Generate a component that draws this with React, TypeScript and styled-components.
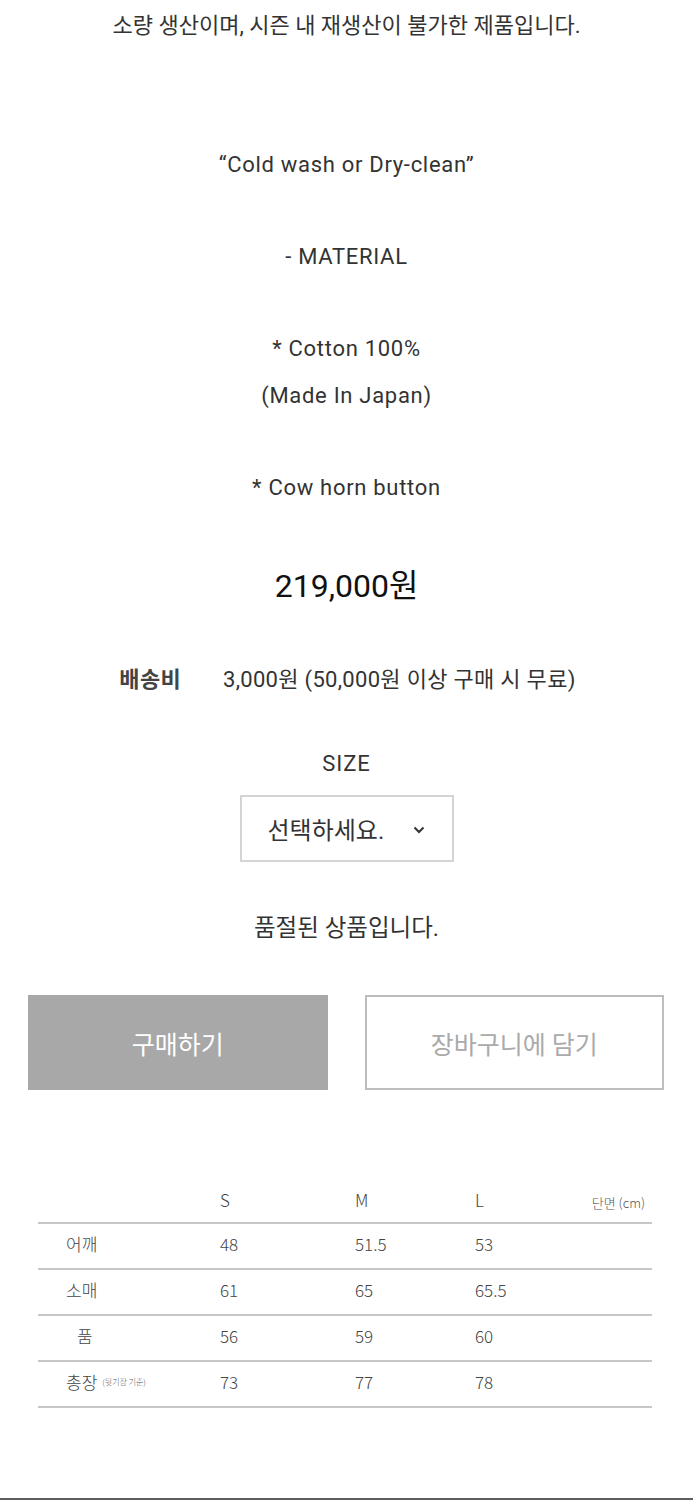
import React from "react";
import styled, { createGlobalStyle } from "styled-components";

const GlobalStyle = createGlobalStyle`
  body {
    margin: 0;
    background: #fff;
    font-family: Roboto, "Noto Sans CJK KR", sans-serif;
    color: #333;
  }
`;

const sizes = [
  { label: "어깨", values: ["48", "51.5", "53"] },
  { label: "소매", values: ["61", "65", "65.5"] },
  { label: "품", values: ["56", "59", "60"], indent: true },
  { label: "총장", note: "(뒷기장 기준)", values: ["73", "77", "78"] },
];

const App = () => {
  return (
    <Page>
      <GlobalStyle />
      <Description>
        <Para>소량 생산이며, 시즌 내 재생산이 불가한 제품입니다.</Para>
        <Para $gap={2} $latin>“Cold wash or Dry-clean”</Para>
        <Para $gap={1} $latin>- MATERIAL</Para>
        <Para $gap={1} $latin>* Cotton 100%</Para>
        <Para $latin>(Made In Japan)</Para>
        <Para $gap={1} $latin>* Cow horn button</Para>
      </Description>

      <Price>219,000원</Price>

      <Delivery>
        <DeliveryLabel>배송비</DeliveryLabel>
        <span>3,000원 (50,000원 이상 구매 시 무료)</span>
      </Delivery>

      <OptionTitle>SIZE</OptionTitle>
      <Select>
        <span>선택하세요.</span>
        <svg width="12" height="8" viewBox="0 0 12 8">
          <polyline points="1.5,1.5 6,6 10.5,1.5" fill="none" stroke="#333" strokeWidth="2" />
        </svg>
      </Select>

      <SoldOut>품절된 상품입니다.</SoldOut>

      <Buttons>
        <BuyButton>구매하기</BuyButton>
        <CartButton>장바구니에 담기</CartButton>
      </Buttons>

      <SizeTable>
        <HeadRow>
          <Cell />
          <Cell>S</Cell>
          <Cell>M</Cell>
          <Cell>L</Cell>
          <Unit>단면 (cm)</Unit>
        </HeadRow>
        {sizes.map((row) => (
          <Row key={row.label}>
            <Label $indent={row.indent}>
              {row.label}
              {row.note && <Note>{row.note}</Note>}
            </Label>
            {row.values.map((v, i) => (
              <Cell key={i}>{v}</Cell>
            ))}
            <Cell />
          </Row>
        ))}
      </SizeTable>

      <Footer />
    </Page>
  );
};

const Page = styled.div`
  width: 693px;
  display: flex;
  flex-direction: column;
  align-items: center;
`;

const Description = styled.div`
  padding-top: 3px;
  display: flex;
  flex-direction: column;
  align-items: center;
`;

const Para = styled.p<{ $gap?: number; $latin?: boolean }>`
  margin: 0;
  margin-top: ${(p) => (p.$gap ? p.$gap * 46.2 : 0)}px;
  font-size: 22px;
  letter-spacing: ${(p) => (p.$latin ? "0.7px" : "0")};
  line-height: 46.2px;
  color: #333;
  text-align: center;
  white-space: nowrap;
`;

const Price = styled.div`
  margin-top: 55px;
  font-size: 32px;
  line-height: 40px;
  color: #111;
`;

const Delivery = styled.div`
  margin-top: 59px;
  display: flex;
  gap: 42px;
  font-size: 22px;
  letter-spacing: 0.3px;
  line-height: 30px;
  color: #333;
  padding-left: 2px;
  white-space: nowrap;
`;

const DeliveryLabel = styled.span`
  font-weight: 700;
  color: #444;
`;

const OptionTitle = styled.div`
  margin-top: 54px;
  font-size: 22px;
  letter-spacing: 1px;
  line-height: 30px;
  color: #333;
`;

const Select = styled.div`
  margin-top: 16px;
  box-sizing: border-box;
  width: 214px;
  height: 67px;
  border: 2px solid #d4d4d4;
  display: flex;
  align-items: center;
  justify-content: space-between;
  padding: 0 27px 0 26px;
  font-size: 24px;
  color: #333;

  svg {
    margin-top: 2px;
  }
`;

const SoldOut = styled.div`
  margin-top: 51px;
  font-size: 23.5px;
  line-height: 30px;
  color: #333;
`;

const Buttons = styled.div`
  margin-top: 52px;
  width: 636px;
  display: flex;
  gap: 37px;
  padding-right: 1px;
`;

const BaseButton = styled.div`
  box-sizing: border-box;
  width: 300px;
  height: 95px;
  display: flex;
  align-items: center;
  justify-content: center;
  font-size: 25px;
`;

const BuyButton = styled(BaseButton)`
  background: #a8a8a8;
  color: #fff;
`;

const CartButton = styled(BaseButton)`
  border: 2px solid #bdbdbd;
  color: #aaa;
`;

const SizeTable = styled.div`
  margin-top: 92px;
  width: 614px;
  font-family: "Noto Sans CJK KR", sans-serif;
  font-weight: 300;
  color: #444;
  margin-left: 1px;
  margin-right: 4px;
`;

const columns = "182px 135px 120px 110px 1fr";

const HeadRow = styled.div`
  display: grid;
  grid-template-columns: ${columns};
  align-items: center;
  height: 40px;
  border-bottom: 2px solid #c8c8c8;
  font-size: 17px;
`;

const Row = styled.div`
  display: grid;
  grid-template-columns: ${columns};
  align-items: center;
  height: 44px;
  border-bottom: 2px solid #c8c8c8;
  font-size: 17px;
`;

const Cell = styled.div`
  padding-bottom: 5px;
`;

const Label = styled.div<{ $indent?: boolean }>`
  padding-left: ${(p) => (p.$indent ? 39 : 28)}px;
  padding-bottom: 5px;
  display: flex;
  align-items: center;
`;

const Note = styled.span`
  font-size: 8px;
  margin-left: 5px;
  color: #555;
`;

const Unit = styled.div`
  font-size: 13px;
  text-align: right;
  padding-right: 7px;
  color: #555;
`;

const Footer = styled.div`
  margin-top: 90px;
  width: 100%;
  height: 20px;
  border-top: 2px solid #5e5e5e;
  background: #fff;
`;

export default App;
